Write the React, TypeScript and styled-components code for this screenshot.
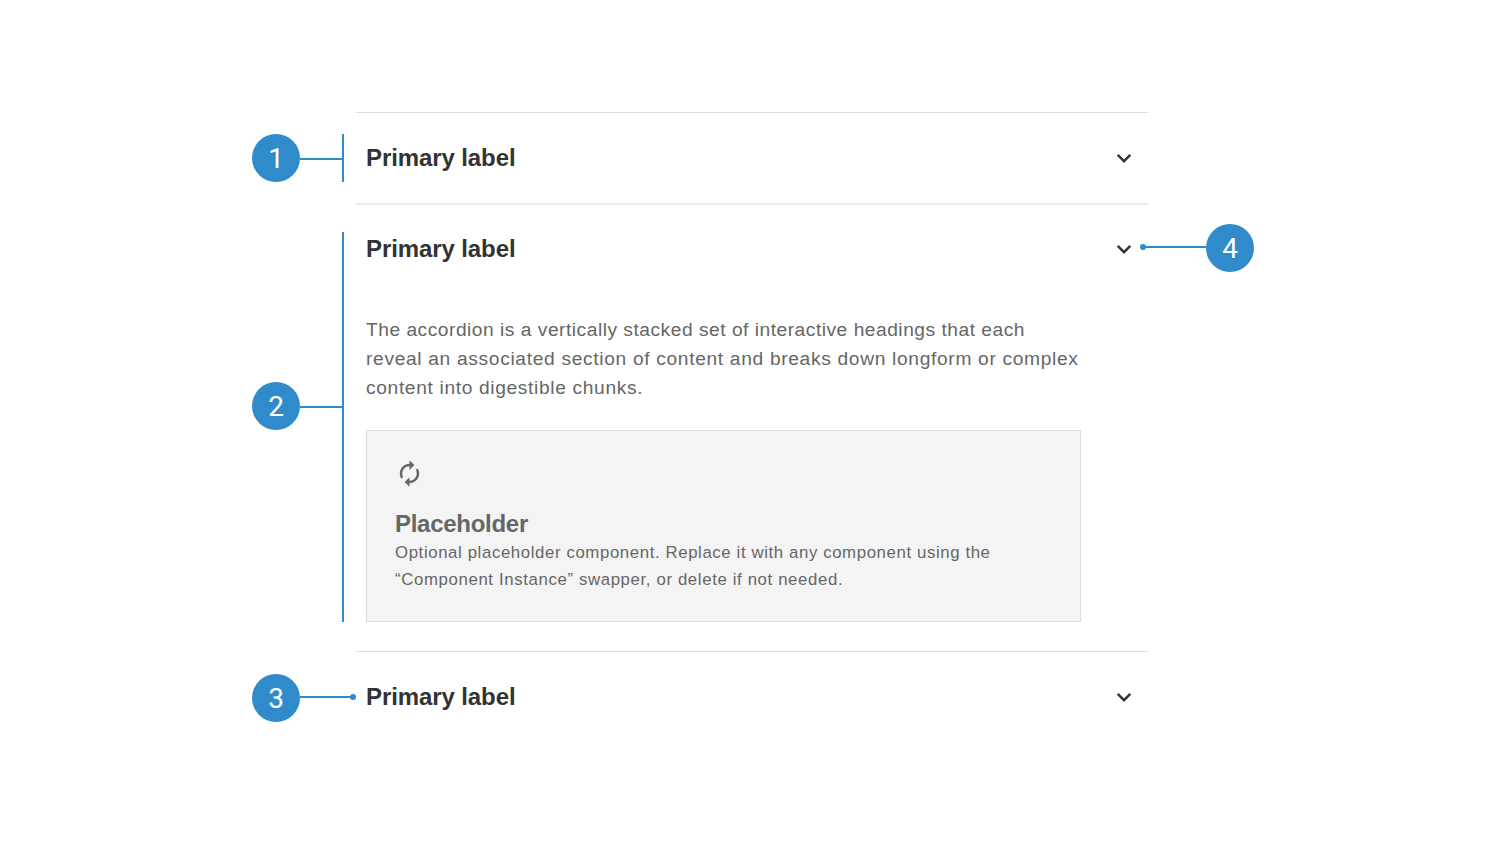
import React from "react";
import styled, { createGlobalStyle } from "styled-components";

const BLUE = "#2f8bca";
const INK = "#333333";
const GREY = "#666666";

const GlobalStyle = createGlobalStyle`
  body { margin: 0; background: #ffffff; }
  *, *::before, *::after { box-sizing: border-box; }
`;

const Page = styled.main`
  width: 1504px;
  height: 856px;
  padding: 112px 250px 0 252px;
  background: #ffffff;
  font-family: "Liberation Sans", Arial, sans-serif;
  overflow: hidden;
`;

const Row = styled.section<{ $height: number }>`
  display: grid;
  grid-template-columns: 104px 792px 106px;
  height: ${(p) => p.$height}px;
`;

const Item = styled.article<{ $line: string }>`
  border-top: ${(p) => p.$line};
`;

const Header = styled.header<{ $height: number }>`
  display: flex;
  align-items: center;
  justify-content: space-between;
  height: ${(p) => p.$height}px;
  padding: 0 14px 0 10px;
`;

const Label = styled.h2`
  margin: 0;
  color: ${INK};
  font-size: 24px;
  line-height: 30px;
  font-weight: 700;
  letter-spacing: -0.1px;
`;

const Body = styled.div`
  padding: 22px 0 0 10px;
`;

const Copy = styled.p`
  margin: 0;
  color: ${GREY};
  font-size: 19.2px;
  line-height: 29px;
`;

const Line = styled.span<{ $spacing: number }>`
  display: block;
  white-space: nowrap;
  letter-spacing: ${(p) => p.$spacing}px;
`;

const Placeholder = styled.div`
  width: 715px;
  height: 192px;
  margin-top: 28px;
  padding: 28px 28px 0;
  border: 1px solid #dddddd;
  background: #f4f4f4;
  color: ${GREY};
  svg { display: block; margin-left: -0.3px; }
`;

const PlaceholderTitle = styled.h3`
  margin: 21px 0 0;
  font-size: 24px;
  line-height: 30px;
  font-weight: 700;
  letter-spacing: -0.28px;
`;

const PlaceholderText = styled.p`
  margin: 1px 0 0;
  font-size: 16.8px;
  line-height: 26.5px;
`;

const Callout = styled.div<{ $top: number }>`
  display: flex;
  align-items: flex-start;
  padding-top: ${(p) => p.$top}px;
`;

const Badge = styled.span<{ $top?: number }>`
  display: flex;
  flex: none;
  align-items: center;
  justify-content: center;
  width: 48px;
  height: 48px;
  margin-top: ${(p) => p.$top ?? 0}px;
  padding-top: 2px;
  border-radius: 50%;
  background: ${BLUE};
  color: #ffffff;
  font: 400 28px/46px Roboto, sans-serif;
`;

const Connector = styled.span<{ $width: number; $top: number }>`
  flex: none;
  width: ${(p) => p.$width}px;
  height: 2px;
  margin-top: ${(p) => p.$top}px;
  background: ${BLUE};
`;

const Bracket = styled.span<{ $height: number }>`
  flex: none;
  width: 2px;
  height: ${(p) => p.$height}px;
  background: ${BLUE};
`;

const Dot = styled.span<{ $left?: number }>`
  flex: none;
  width: 6px;
  height: 6px;
  margin: 20px -1px 0 ${(p) => p.$left ?? -1}px;
  border-radius: 50%;
  background: ${BLUE};
`;

const Chevron = () => (
  <svg width="20" height="20" viewBox="0 0 20 20" fill="none" aria-hidden="true">
    <path d="M3.7 6.9 10 13.2l6.3-6.3" stroke={INK} strokeWidth="2.4" />
  </svg>
);

const CycleIcon = () => (
  <svg width="29" height="29" viewBox="0 0 24 24" fill="currentColor" aria-hidden="true">
    <path d="M12 6v3l4-4-4-4v3c-4.42 0-8 3.58-8 8 0 1.57.46 3.03 1.24 4.26L6.7 14.8c-.45-.83-.7-1.79-.7-2.8 0-3.31 2.69-6 6-6zm6.76 1.74L17.3 9.2c.44.84.7 1.79.7 2.8 0 3.31-2.69 6-6 6v-3l-4 4 4 4v-3c4.42 0 8-3.58 8-8 0-1.57-.46-3.03-1.24-4.26z" />
  </svg>
);

export default function App() {
  return (
    <Page>
      <GlobalStyle />
      <Row $height={91}>
        <Callout $top={22}>
          <Badge>1</Badge>
          <Connector $width={42} $top={24} />
          <Bracket $height={48} />
        </Callout>
        <Item $line="1px solid #dddddd">
          <Header $height={90}>
            <Label>Primary label</Label>
            <Chevron />
          </Header>
        </Item>
      </Row>
      <Row $height={448}>
        <Callout $top={29}>
          <Badge $top={150}>2</Badge>
          <Connector $width={42} $top={174} />
          <Bracket $height={390} />
        </Callout>
        <Item $line="2px solid #ebebeb">
          <Header $height={88}>
            <Label>Primary label</Label>
            <Chevron />
          </Header>
          <Body>
            <Copy>
              <Line $spacing={0.51}>The accordion is a vertically stacked set of interactive headings that each</Line>
              <Line $spacing={0.67}>reveal an associated section of content and breaks down longform or complex</Line>
              <Line $spacing={0.65}>content into digestible chunks.</Line>
            </Copy>
            <Placeholder>
              <CycleIcon />
              <PlaceholderTitle>Placeholder</PlaceholderTitle>
              <PlaceholderText>
                <Line $spacing={0.61}>Optional placeholder component. Replace it with any component using the</Line>
                <Line $spacing={0.63}>“Component Instance” swapper, or delete if not needed.</Line>
              </PlaceholderText>
            </Placeholder>
          </Body>
        </Item>
        <Callout $top={21}>
          <Dot $left={-8} />
          <Connector $width={61} $top={22} />
          <Badge>4</Badge>
        </Callout>
      </Row>
      <Row $height={92}>
        <Callout $top={23}>
          <Badge>3</Badge>
          <Connector $width={51} $top={22} />
          <Dot />
        </Callout>
        <Item $line="1px solid #dedede">
          <Header $height={90}>
            <Label>Primary label</Label>
            <Chevron />
          </Header>
        </Item>
      </Row>
    </Page>
  );
}
